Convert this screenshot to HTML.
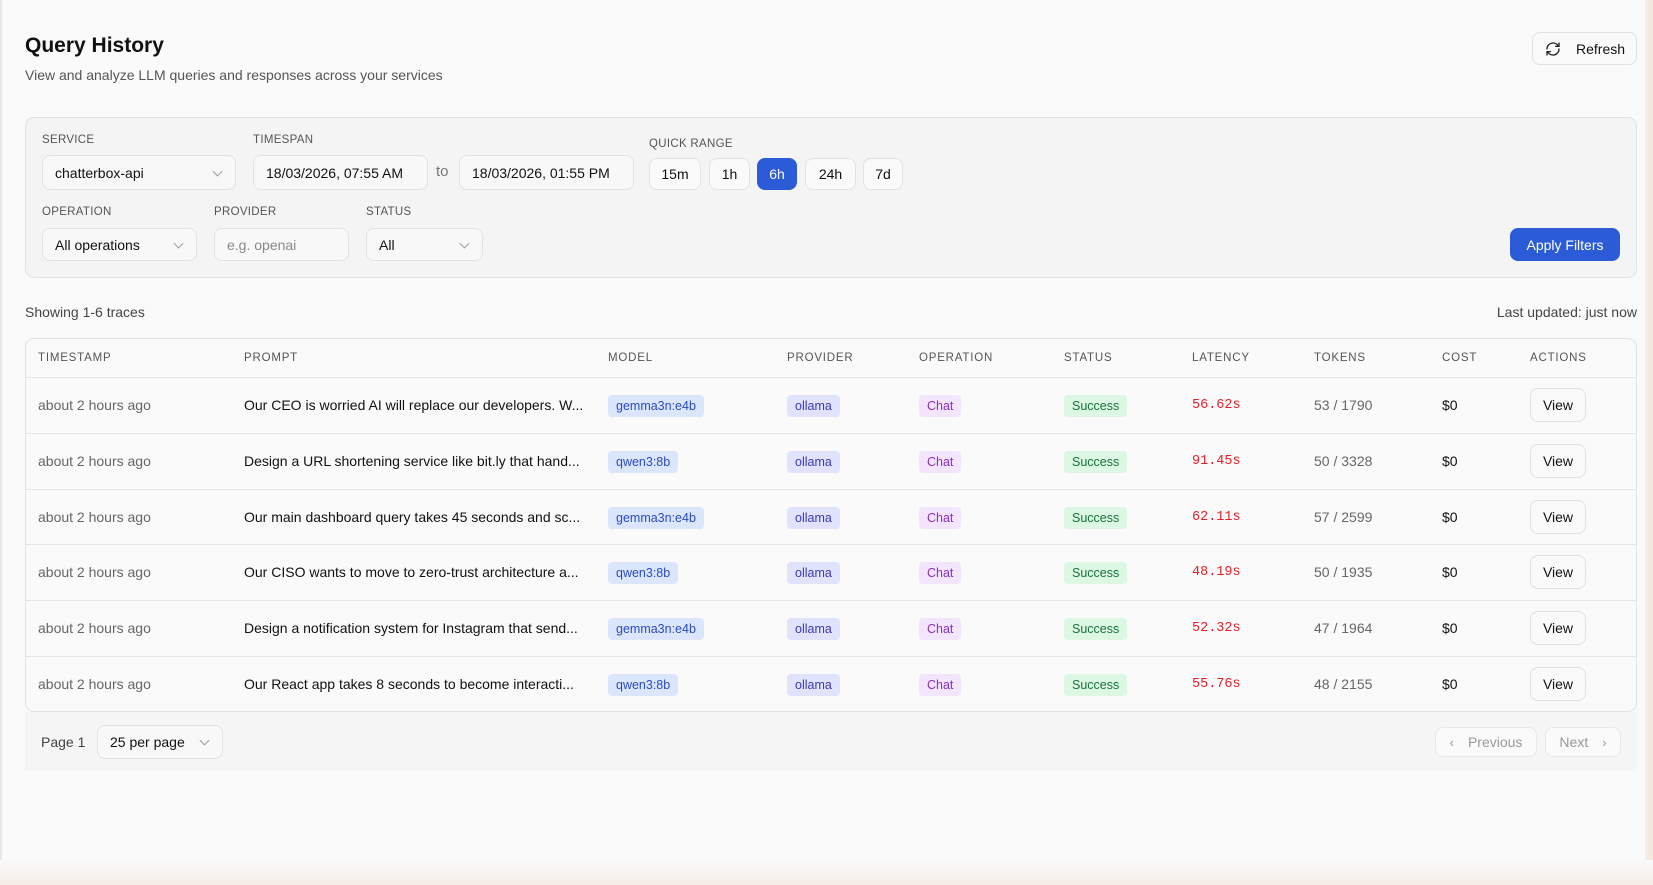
<!DOCTYPE html>
<html><head><meta charset="utf-8"><style>
*{box-sizing:border-box;margin:0;padding:0}
body{width:1653px;height:885px;background:#fafafa;font-family:"Liberation Sans",sans-serif;color:#111;position:relative;overflow:hidden;font-size:14px}
.abs{position:absolute}
.edge{left:0;top:0;width:2px;height:885px;background:#e8e8e8}
.rs{left:1645px;top:0;width:8px;height:885px;background:linear-gradient(90deg,#f6efe9,#f3e6dd)}
.bs{left:0;top:860px;width:1653px;height:25px;background:linear-gradient(#fafafa,#f5ebe5)}
.btn{position:absolute;border:1px solid #e2e2e2;border-radius:8px;background:#fafafa;display:flex;align-items:center;justify-content:center;font-size:14px;color:#111}
.panel{left:25px;top:117px;width:1612px;height:161px;background:#f4f4f4;border:1px solid #e2e2e2;border-radius:9px}
.lbl{position:absolute;font-size:11.5px;color:#555;letter-spacing:.3px}
.inp{position:absolute;border:1px solid #e2e2e2;border-radius:8px;background:#f8f8f8;display:flex;align-items:center;padding-left:12px;font-size:14px;color:#111}
.chev{position:absolute;right:14px;top:50%;width:7px;height:7px;border-right:1px solid #999;border-bottom:1px solid #999;transform:translateY(-70%) rotate(45deg)}
.tbl{left:25px;top:338px;width:1612px;height:374px;border:1px solid #e2e2e2;border-radius:9px;background:#fafafa;overflow:hidden}
.th{position:absolute;top:0;height:39px;line-height:39px;font-size:11.5px;color:#555;letter-spacing:.8px}
.row{position:absolute;left:0;width:1612px;height:56px;border-top:1px solid #e6e6e6}
.c{position:absolute;top:0;height:55px;line-height:55px;font-size:14px}
.tag{position:absolute;top:17px;height:22px;line-height:22px;padding:0 8px;border-radius:4px;font-size:12.5px}
</style></head><body>
<div class="abs edge"></div>
<div class="abs" style="left:25px;top:34px;font-size:21px;font-weight:bold;color:#111">Query History</div>
<div class="abs" style="left:25px;top:67px;font-size:14px;color:#555">View and analyze LLM queries and responses across your services</div>
<div class="btn" style="left:1532px;top:32px;width:105px;height:33px;justify-content:flex-start;padding-left:12px">
<svg width="16" height="16" viewBox="0 0 24 24" fill="none" stroke="#222" stroke-width="2" stroke-linecap="round" stroke-linejoin="round"><path d="M3 12a9 9 0 0 1 9-9 9.75 9.75 0 0 1 6.74 2.74L21 8"/><path d="M21 3v5h-5"/><path d="M21 12a9 9 0 0 1-9 9 9.75 9.75 0 0 1-6.74-2.74L3 16"/><path d="M8 16H3v5"/></svg>
<span style="margin-left:15px">Refresh</span></div>

<div class="abs panel"></div>
<div class="lbl" style="left:42px;top:134px">SERVICE</div>
<div class="inp" style="left:42px;top:155px;width:194px;height:35px">chatterbox-api<span class="chev"></span></div>
<div class="lbl" style="left:253px;top:134px">TIMESPAN</div>
<div class="inp" style="left:253px;top:155px;width:175px;height:35px">18/03/2026, 07:55 AM</div>
<div class="abs" style="left:436px;top:163px;color:#777;font-size:15px">to</div>
<div class="inp" style="left:459px;top:155px;width:175px;height:35px">18/03/2026, 01:55 PM</div>
<div class="lbl" style="left:649px;top:138px">QUICK RANGE</div>
<div class="btn" style="left:649px;top:158px;width:52px;height:32px">15m</div>
<div class="btn" style="left:709px;top:158px;width:41px;height:32px">1h</div>
<div class="btn" style="left:757px;top:158px;width:40px;height:32px;background:#2b5bd7;border-color:#2b5bd7;color:#fff">6h</div>
<div class="btn" style="left:805px;top:158px;width:51px;height:32px">24h</div>
<div class="btn" style="left:863px;top:158px;width:40px;height:32px">7d</div>
<div class="lbl" style="left:42px;top:206px">OPERATION</div>
<div class="inp" style="left:42px;top:228px;width:155px;height:33px">All operations<span class="chev"></span></div>
<div class="lbl" style="left:214px;top:206px">PROVIDER</div>
<div class="inp" style="left:214px;top:228px;width:135px;height:33px;color:#888">e.g. openai</div>
<div class="lbl" style="left:366px;top:206px">STATUS</div>
<div class="inp" style="left:366px;top:228px;width:117px;height:33px">All<span class="chev"></span></div>
<div class="btn" style="left:1510px;top:228px;width:110px;height:33px;background:#2b5bd7;border-color:#2b5bd7;color:#fff">Apply Filters</div>

<div class="abs" style="left:25px;top:304px;color:#444">Showing 1-6 traces</div>
<div class="abs" style="right:16px;top:304px;color:#444">Last updated: just now</div>

<div class="abs tbl">
<div class="th" style="left:12px">TIMESTAMP</div>
<div class="th" style="left:218px">PROMPT</div>
<div class="th" style="left:582px">MODEL</div>
<div class="th" style="left:761px">PROVIDER</div>
<div class="th" style="left:893px">OPERATION</div>
<div class="th" style="left:1038px">STATUS</div>
<div class="th" style="left:1166px">LATENCY</div>
<div class="th" style="left:1288px">TOKENS</div>
<div class="th" style="left:1416px">COST</div>
<div class="th" style="left:1504px">ACTIONS</div>
<div id="rows"></div>
</div>

<div class="abs" style="left:25px;top:712px;width:1612px;height:59px;background:#f5f5f5"></div>
<div class="abs" style="left:41px;top:734px;color:#444">Page 1</div>
<div class="inp" style="left:97px;top:725px;width:126px;height:34px;background:#f8f8f8">25 per page<span class="chev"></span></div>
<div class="btn" style="left:1435px;top:727px;width:102px;height:30px;color:#999;border-color:#e8e8e8"><span style="font-size:13px;margin-right:14px">&#x2039;</span>Previous</div>
<div class="btn" style="left:1545px;top:727px;width:76px;height:30px;color:#999;border-color:#e8e8e8">Next<span style="font-size:13px;margin-left:14px">&#x203A;</span></div>
<div class="abs rs"></div>
<div class="abs bs"></div>
<script>
var d=[["Our CEO is worried AI will replace our developers. W...","gemma3n:e4b","56.62s","53 / 1790"],
["Design a URL shortening service like bit.ly that hand...","qwen3:8b","91.45s","50 / 3328"],
["Our main dashboard query takes 45 seconds and sc...","gemma3n:e4b","62.11s","57 / 2599"],
["Our CISO wants to move to zero-trust architecture a...","qwen3:8b","48.19s","50 / 1935"],
["Design a notification system for Instagram that send...","gemma3n:e4b","52.32s","47 / 1964"],
["Our React app takes 8 seconds to become interacti...","qwen3:8b","55.76s","48 / 2155"]];
var h="";d.forEach(function(r,i){h+='<div class="row" style="top:'+(38+i*55.8)+'px">'+
'<div class="c" style="left:12px;color:#666">about 2 hours ago</div>'+
'<div class="c" style="left:218px">'+r[0]+'</div>'+
'<div class="tag" style="left:582px;background:#dbe6fd;color:#2a4bc0">'+r[1]+'</div>'+
'<div class="tag" style="left:761px;background:#e0e3fb;color:#3a3ab0">ollama</div>'+
'<div class="tag" style="left:893px;background:#f3e6fc;color:#8a2ec0">Chat</div>'+
'<div class="tag" style="left:1038px;background:#dcf8e4;color:#17723a">Success</div>'+
'<div class="c" style="left:1166px;color:#e5202a;font-family:\'Liberation Mono\',monospace;font-size:13.5px">'+r[2]+'</div>'+
'<div class="c" style="left:1288px;color:#666">'+r[3]+'</div>'+
'<div class="c" style="left:1416px">$0</div>'+
'<div class="btn" style="left:1504px;top:10px;width:56px;height:34px">View</div></div>';});
document.getElementById("rows").innerHTML=h;
</script>
</body></html>
